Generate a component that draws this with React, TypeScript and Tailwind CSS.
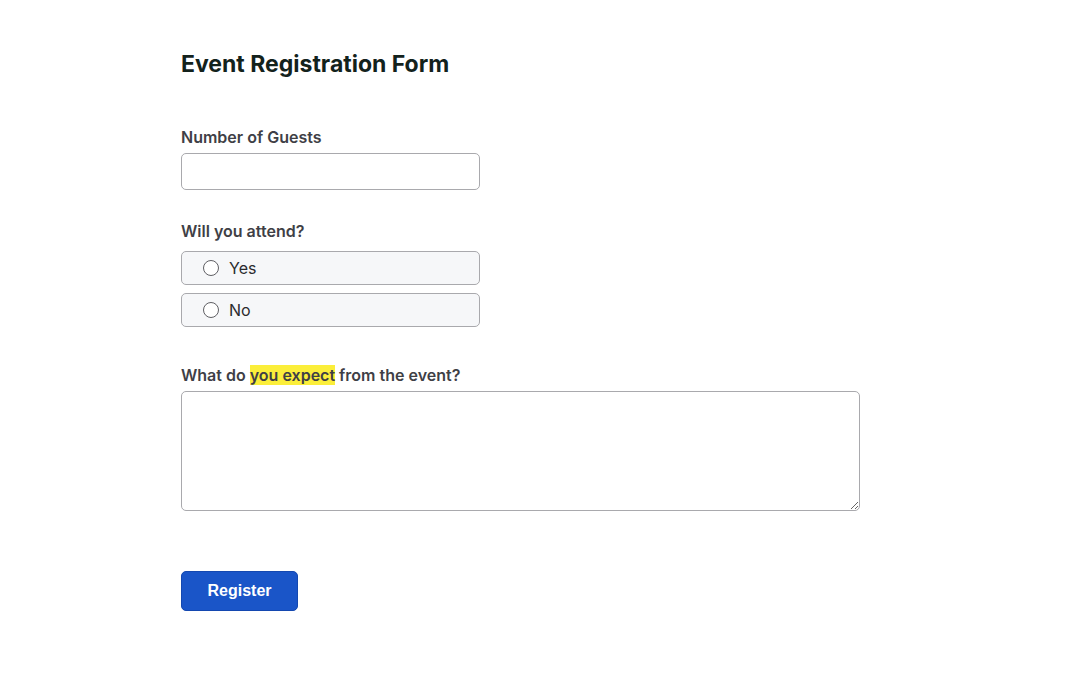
import React from "react";

export default function App() {
  return (
    <div className="min-h-screen bg-white" style={{ fontFamily: "Inter, 'Noto Sans', sans-serif" }}>
      <div className="pl-[181px] pt-[48px]">
        <h1 className="text-[23px] leading-[32px] font-bold text-[#13221c]">Event Registration Form</h1>

        <div className="mt-[45px]">
          <label className="block text-[16px] leading-[24px] font-semibold text-[#3f3f46]">Number of Guests</label>
          <input
            type="number"
            className="mt-[4px] block w-[299px] h-[37px] rounded-[5px] border border-[#a9a9ad] bg-white px-3 outline-none"
          />
        </div>

        <div className="mt-[29px]">
          <div className="text-[16px] leading-[24px] font-semibold text-[#3f3f46]">Will you attend?</div>
          <div className="mt-[8px] flex flex-col gap-[8px]">
            {["Yes", "No"].map((o) => (
              <label
                key={o}
                className="flex items-center w-[299px] h-[34px] rounded-[5px] border border-[#a9a9ad] bg-[#f6f7f9] pl-[21px]"
              >
                <span className="w-[16px] h-[16px] rounded-full border-[1.5px] border-[#5f5f64] bg-white" />
                <span className="ml-[10px] text-[16px] text-[#2b2b2e]">{o}</span>
              </label>
            ))}
          </div>
        </div>

        <div className="mt-[36px]">
          <label className="block text-[16px] leading-[24px] font-semibold text-[#3f3f46]">
            What do <span className="bg-[#fbee3a]">you expect</span> from the event?
          </label>
          <textarea className="mt-[4px] block w-[679px] h-[120px] rounded-[5px] border border-[#a9a9ad] bg-white outline-none resize" />
        </div>

        <button
          className="mt-[60px] w-[117px] h-[40px] rounded-[5px] bg-[#1a55c8] border border-[#1448b0] text-white text-[16px] font-bold"
          style={{ fontFamily: "'Liberation Sans', Arial, sans-serif" }}
        >
          Register
        </button>
      </div>
    </div>
  );
}
